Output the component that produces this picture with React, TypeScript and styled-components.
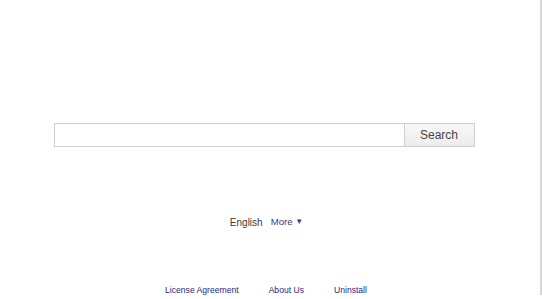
import styled, { createGlobalStyle } from "styled-components";

const GlobalStyle = createGlobalStyle`
  html, body {
    margin: 0;
    padding: 0;
    background: #fff;
  }
  body {
    font-family: "Liberation Sans", Arial, sans-serif;
  }
`;

const App = () => {
  return (
    <>
      <GlobalStyle />
      <Page>
        <Content>
          <SearchForm onSubmit={(e) => e.preventDefault()}>
            <SearchInput type="text" aria-label="Search" />
            <SearchButton type="submit">Search</SearchButton>
          </SearchForm>
          <LangRow>
            <span className="lang">English</span>
            <a className="more" href="#">
              More <span className="arrow">▼</span>
            </a>
          </LangRow>
          <Footer>
            <a href="#">License Agreement</a>
            <a href="#">About Us</a>
            <a href="#">Uninstall</a>
          </Footer>
        </Content>
      </Page>
    </>
  );
};

const Page = styled.div`
  width: 540px;
  height: 295px;
  border-right: 2px solid #d8d8d8;
  display: flex;
  justify-content: flex-start;
`;

const Content = styled.div`
  width: 530px;
  padding-top: 123px;
  display: flex;
  flex-direction: column;
  align-items: center;
`;

const SearchForm = styled.form`
  display: flex;
  margin: 0 0 0 -2px;
  height: 24px;
`;

const SearchInput = styled.input`
  box-sizing: border-box;
  width: 350px;
  height: 24px;
  margin: 0;
  border: 1px solid #cfcfcf;
  border-right: none;
  outline: none;
  padding: 0 6px;
  background: #fff;
`;

const SearchButton = styled.button`
  box-sizing: border-box;
  width: 71px;
  height: 24px;
  margin: 0;
  border: 1px solid #cfcfcf;
  background: linear-gradient(#f8f8f8, #ececec);
  font-family: "Liberation Sans", Arial, sans-serif;
  font-size: 12px;
  color: #444;
  padding: 0;
  cursor: pointer;
`;

const LangRow = styled.div`
  margin: 67px 0 0 3px;
  display: flex;
  align-items: center;
  gap: 8px;
  line-height: 16px;
  .lang {
    font-size: 10px;
    color: #3a3a3a;
  }
  .more {
    font-size: 9.6px;
    color: #3a3a8c;
    text-decoration: none;
  }
  .arrow {
    font-size: 8px;
    position: relative;
    top: -1px;
  }
`;

const Footer = styled.div`
  margin: 52px 0 0 2px;
  display: flex;
  gap: 30px;
  line-height: 14px;
  a {
    font-size: 8.6px;
    color: #28287a;
    text-decoration: none;
  }
`;

export default App;
